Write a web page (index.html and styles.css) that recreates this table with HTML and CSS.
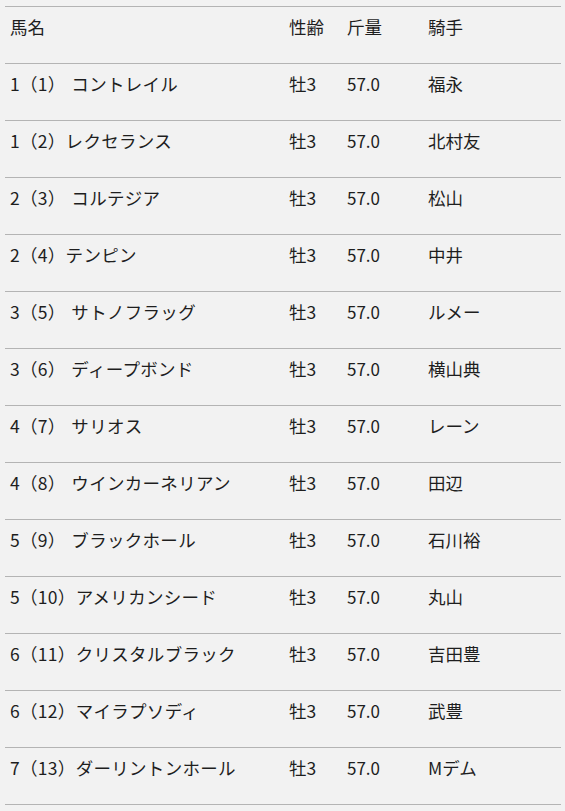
FILE: index.html
```html
<!DOCTYPE html>
<html lang="ja">
<head>
<meta charset="utf-8">
<title>出馬表</title>
<link rel="stylesheet" href="styles.css">
</head>
<body>
<table class="entries">
  <colgroup>
    <col class="c-name">
    <col class="c-age">
    <col class="c-weight">
    <col class="c-jockey">
  </colgroup>
  <thead>
    <tr><th>馬名</th><th>性齢</th><th>斤量</th><th>騎手</th></tr>
  </thead>
  <tbody>
    <tr><td>1（1） コントレイル</td><td>牡3</td><td>57.0</td><td>福永</td></tr>
    <tr><td>1（2）レクセランス</td><td>牡3</td><td>57.0</td><td>北村友</td></tr>
    <tr><td>2（3） コルテジア</td><td>牡3</td><td>57.0</td><td>松山</td></tr>
    <tr><td>2（4）テンピン</td><td>牡3</td><td>57.0</td><td>中井</td></tr>
    <tr><td>3（5） サトノフラッグ</td><td>牡3</td><td>57.0</td><td>ルメー</td></tr>
    <tr><td>3（6） ディープボンド</td><td>牡3</td><td>57.0</td><td>横山典</td></tr>
    <tr><td>4（7） サリオス</td><td>牡3</td><td>57.0</td><td>レーン</td></tr>
    <tr><td>4（8） ウインカーネリアン</td><td>牡3</td><td>57.0</td><td>田辺</td></tr>
    <tr><td>5（9） ブラックホール</td><td>牡3</td><td>57.0</td><td>石川裕</td></tr>
    <tr><td>5（10）アメリカンシード</td><td>牡3</td><td>57.0</td><td>丸山</td></tr>
    <tr><td>6（11）クリスタルブラック</td><td>牡3</td><td>57.0</td><td>吉田豊</td></tr>
    <tr><td>6（12）マイラプソディ</td><td>牡3</td><td>57.0</td><td>武豊</td></tr>
    <tr><td>7（13）ダーリントンホール</td><td>牡3</td><td>57.0</td><td>Mデム</td></tr>
  </tbody>
</table>
</body>
</html>
```

FILE: styles.css
```css
html, body {
  margin: 0;
  padding: 0;
  background: #f2f2f2;
}

body {
  font-family: "Noto Sans CJK JP", "Noto Sans", sans-serif;
  font-size: 17.5px;
  color: #1e1e1e;
}

.entries {
  margin: 6px 0 0 5px;
  width: 556px;
  border-collapse: collapse;
  table-layout: fixed;
  border-top: 1px solid #b4b4b4;
}

.c-name { width: 279px; }
.c-age { width: 58px; }
.c-weight { width: 81px; }
.c-jockey { width: 138px; }

.entries th,
.entries td {
  height: 56px;
  box-sizing: border-box;
  padding: 8px 0 24px 5px;
  line-height: 24px;
  text-align: left;
  vertical-align: top;
  font-weight: normal;
  white-space: nowrap;
  border-bottom: 1px solid #b4b4b4;
}

.entries td:first-child {
  letter-spacing: 0.3px;
  word-spacing: 1.5px;
}

.entries td:nth-child(3) {
  font-size: 17px;
}
```
